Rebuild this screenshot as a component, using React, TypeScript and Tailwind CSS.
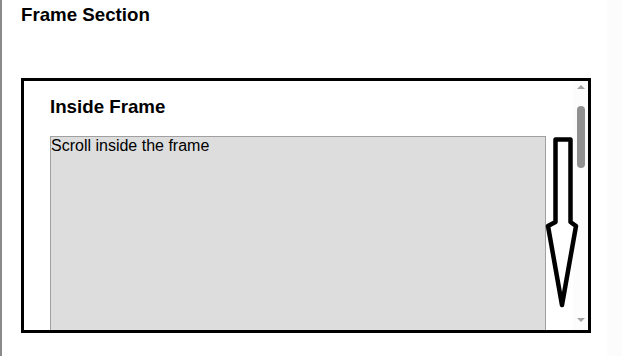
import React from 'react';

const DownArrowSketch: React.FC = () => (
  <svg
    className="absolute left-[540px] top-[130px]"
    width="45"
    height="185"
    viewBox="540 130 45 185"
    fill="none"
  >
    <path
      d="M562 305 L548 226 L555.5 222 L555.5 139.5 L570.5 139.5 L570.5 222 L576 226 Z"
      stroke="#000"
      strokeWidth="4.5"
      strokeLinejoin="round"
      strokeLinecap="round"
    />
  </svg>
);

const FrameScrollbar: React.FC = () => (
  <div className="w-[15px] shrink-0 bg-[#fcfcfc] flex flex-col items-center">
    <div className="mt-[4px] w-0 h-0 border-x-[4px] border-x-transparent border-b-[4px] border-b-[#a3a3a3]" />
    <div className="mt-[17px] w-[8px] h-[62px] rounded-full bg-[#909090]" />
    <div className="flex-1" />
    <div className="mb-[8px] w-0 h-0 border-x-[4px] border-x-transparent border-t-[4px] border-t-[#a3a3a3]" />
  </div>
);

export default function App() {
  return (
    <div
      className="relative w-[622px] h-[356px] flex bg-white overflow-hidden text-black"
      style={{ fontFamily: '"Liberation Sans", Arial, sans-serif' }}
    >
      <div className="w-[2px] shrink-0 bg-[#8a8a8a]" />

      <div className="flex-1 pl-[19px] pt-[3.5px]">
        <h3 className="m-0 text-[18.72px] leading-[21.5px] font-bold">Frame Section</h3>

        <div className="mt-[53px] w-[570px] h-[255px] border-[3px] border-black flex overflow-hidden">
          <div className="flex-1 min-w-0 pl-[26px] pt-[15px] overflow-hidden">
            <h3 className="m-0 text-[18.72px] leading-[21.5px] font-bold">Inside Frame</h3>
            <div className="mt-[18px] w-[496px] h-[300px] border border-[#a0a0a0] bg-[#dddddd] text-[16px] leading-[18.4px]">
              Scroll inside the frame
            </div>
          </div>
          <FrameScrollbar />
        </div>
      </div>

      <div className="w-[15px] shrink-0 bg-[#fcfcfc]" />

      <DownArrowSketch />
    </div>
  );
}
